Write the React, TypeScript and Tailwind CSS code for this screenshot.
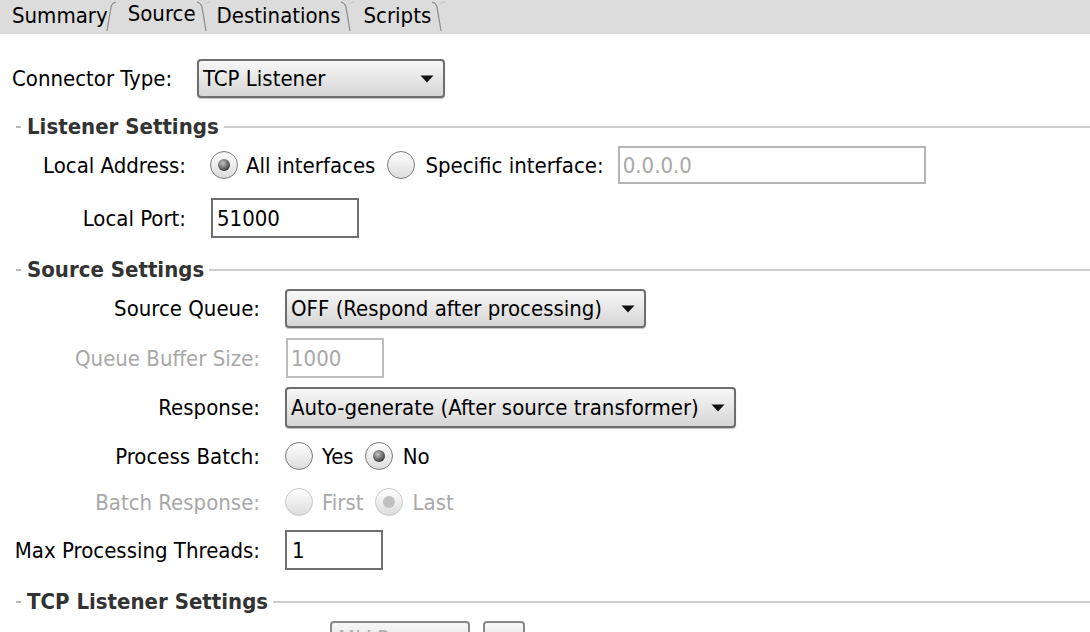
import React from "react";

const font = { fontFamily: '"DejaVu Sans Condensed", "DejaVu Sans", sans-serif' };

function SepLeft() {
  return (
    <svg width="12" height="34" viewBox="0 0 12 34" className="shrink-0">
      <path d="M2 31 L6 7 Q7 3 11 2" stroke="#8a8a8a" strokeWidth="1.2" fill="none" />
    </svg>
  );
}

function SepRight() {
  return (
    <svg width="14" height="34" viewBox="0 0 14 34" className="shrink-0">
      <path d="M1 2 Q5 3 6 7 L10 31" stroke="#8a8a8a" strokeWidth="1.2" fill="none" />
      <path d="M9 4 Q11 2 14 2" stroke="#c4c4c4" strokeWidth="1" fill="none" />
    </svg>
  );
}

function Arrow() {
  return (
    <svg width="14" height="8" viewBox="0 0 14 8" className="shrink-0">
      <path d="M0.5 0.5 L13.5 0.5 L7 7.5 Z" fill="#111" />
    </svg>
  );
}

function Select({ text, w }: { text: string; w: string }) {
  return (
    <div
      className={`${w} h-full flex items-center justify-between rounded-[4px] border-2 border-[#6e6e6e] bg-gradient-to-b from-[#f7f7f7] to-[#d6d6d6] pl-[4px] pr-[9px] text-[22px] text-black shadow-[0_1px_1px_rgba(0,0,0,0.25)]`}
    >
      <span>{text}</span>
      <Arrow />
    </div>
  );
}

function Radio({ checked, disabled }: { checked?: boolean; disabled?: boolean }) {
  return (
    <div
      className={`w-[28px] h-[28px] rounded-full border-[1.5px] flex items-center justify-center bg-gradient-to-b from-[#ffffff] to-[#dcdcdc] shrink-0 ${
        disabled ? "border-[#c8c8c8]" : "border-[#7a7a7a]"
      }`}
    >
      {checked && (
        <div
          className={`w-[12px] h-[12px] rounded-full ${
            disabled
              ? "bg-[#c0c0c0]"
              : "bg-[radial-gradient(circle_at_40%_35%,#c4c4c4,#3a3a3a_75%)]"
          }`}
        />
      )}
    </div>
  );
}

function Heading({ text, mt }: { text: string; mt: string }) {
  return (
    <div className={`${mt} h-[24px] flex items-center`}>
      <div className="w-[5px] h-[2px] bg-[#b8b8b8] ml-[16px] mr-[6px]" />
      <span className="text-[22px] font-bold text-[#333] leading-none">{text}</span>
      <div className="flex-1 h-[2px] bg-[#cfcfcf] ml-[5px]" />
    </div>
  );
}

export default function App() {
  return (
    <div className="w-[1090px] h-[632px] overflow-hidden bg-white text-black" style={font}>
      {/* tabs */}
      <div className="h-[34px] bg-[#dcdcdc] flex items-end text-[22px] leading-none">
        <div className="flex items-center h-[34px] pl-[12px]">
          <span className="pb-[2px]">Summary</span>
          <div className="ml-[-3px]"><SepLeft /></div>
          <span className="ml-[11px] pb-[6px]">Source</span>
          <div><SepRight /></div>
          <span className="ml-[7px] pb-[2px]">Destinations</span>
          <div><SepRight /></div>
          <span className="ml-[9px] pb-[2px]">Scripts</span>
          <div><SepRight /></div>
        </div>
      </div>

      {/* connector type */}
      <div className="mt-[25px] h-[39px] flex items-center text-[22px]">
        <span className="ml-[12px] w-[185px]">Connector Type:</span>
        <Select text="TCP Listener" w="w-[248px]" />
      </div>

      <Heading text="Listener Settings" mt="mt-[17px]" />

      <div className="mt-[7px] h-[38px] flex items-center text-[22px]">
        <span className="w-[186px] text-right">Local Address:</span>
        <div className="ml-[24px] flex items-center">
          <Radio checked />
          <span className="ml-[8px]">All interfaces</span>
          <div className="ml-[12px]"><Radio /></div>
          <span className="ml-[10px]">Specific interface:</span>
          <div className="ml-[14px] w-[308px] h-[38px] border-2 border-[#b4b4b4] flex items-center pl-[3px] text-[#a8a8a8]">
            0.0.0.0
          </div>
        </div>
      </div>

      <div className="mt-[14px] h-[40px] flex items-center text-[22px]">
        <span className="w-[186px] text-right">Local Port:</span>
        <div className="ml-[25px] w-[148px] h-[40px] border-2 border-[#707070] flex items-center pl-[4px]">
          51000
        </div>
      </div>

      <Heading text="Source Settings" mt="mt-[20px]" />

      <div className="mt-[7px] h-[39px] flex items-center text-[22px]">
        <span className="w-[260px] text-right">Source Queue:</span>
        <div className="ml-[25px] h-full">
          <Select text="OFF (Respond after processing)" w="w-[361px]" />
        </div>
      </div>

      <div className="mt-[10px] h-[40px] flex items-center text-[22px]">
        <span className="w-[260px] text-right text-[#a8a8a8]">Queue Buffer Size:</span>
        <div className="ml-[26px] w-[98px] h-[40px] border-2 border-[#bdbdbd] flex items-center pl-[3px] text-[#a8a8a8]">
          1000
        </div>
      </div>

      <div className="mt-[9px] h-[41px] flex items-center text-[22px]">
        <span className="w-[260px] text-right">Response:</span>
        <div className="ml-[25px] h-full">
          <Select text="Auto-generate (After source transformer)" w="w-[451px]" />
        </div>
      </div>

      <div className="mt-[8px] h-[40px] flex items-center text-[22px]">
        <span className="w-[260px] text-right">Process Batch:</span>
        <div className="ml-[25px] flex items-center">
          <Radio />
          <span className="ml-[9px]">Yes</span>
          <div className="ml-[11px]"><Radio checked /></div>
          <span className="ml-[10px]">No</span>
        </div>
      </div>

      <div className="mt-[6px] h-[40px] flex items-center text-[22px] text-[#a8a8a8]">
        <span className="w-[260px] text-right">Batch Response:</span>
        <div className="ml-[25px] flex items-center">
          <Radio disabled />
          <span className="ml-[9px]">First</span>
          <div className="ml-[11px]"><Radio checked disabled /></div>
          <span className="ml-[10px]">Last</span>
        </div>
      </div>

      <div className="mt-[8px] h-[40px] flex items-center text-[22px]">
        <span className="w-[260px] text-right">Max Processing Threads:</span>
        <div className="ml-[25px] w-[98px] h-[40px] border-2 border-[#707070] flex items-center pl-[5px]">
          1
        </div>
      </div>

      <Heading text="TCP Listener Settings" mt="mt-[20px]" />

      <div className="mt-[7px] h-[40px] flex items-start text-[22px] leading-none">
        <div className="ml-[330px] w-[140px] h-[40px] rounded-[4px] border-2 border-[#888] bg-gradient-to-b from-[#f7f7f7] to-[#d6d6d6] pl-[6px] pt-[5px] text-[#b0b0b0]">
          MLLP
        </div>
        <div className="ml-[13px] w-[42px] h-[40px] rounded-[4px] border-2 border-[#888] bg-gradient-to-b from-[#f7f7f7] to-[#d6d6d6]" />
      </div>
    </div>
  );
}
